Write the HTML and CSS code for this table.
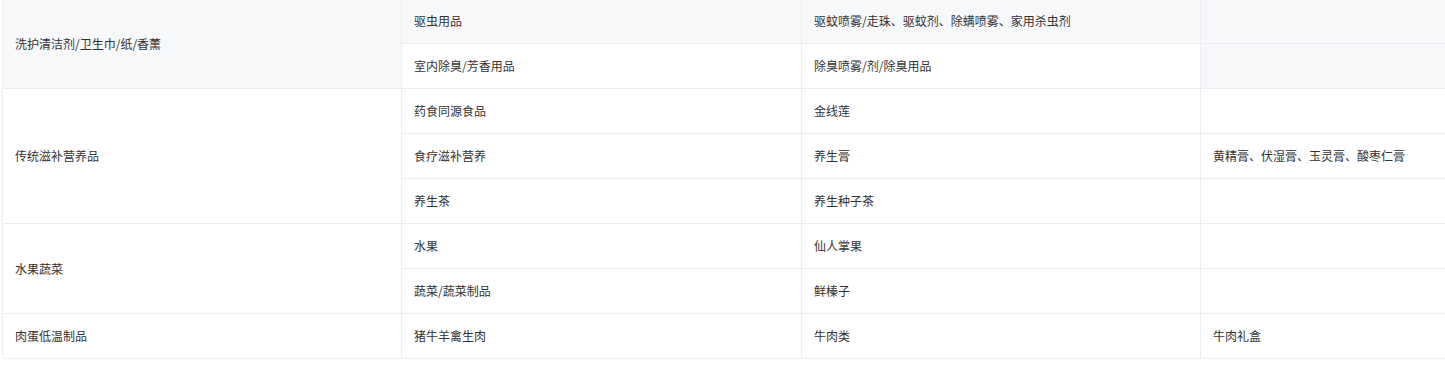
FILE: index.html
```html
<!DOCTYPE html>
<html lang="zh-CN">
<head>
<meta charset="utf-8">
<title>类目表</title>
<link rel="stylesheet" href="styles.css">
</head>
<body>
<div class="scroller">
<div class="table-wrap">
  <table class="cat-table">
    <colgroup>
      <col class="c1"><col class="c2"><col class="c3"><col class="c4">
    </colgroup>
    <tbody>
      <tr class="row-gray">
        <td rowspan="2" class="gray">洗护清洁剂/卫生巾/纸/香薰</td>
        <td>驱虫用品</td>
        <td>驱蚊喷雾/走珠、驱蚊剂、除螨喷雾、家用杀虫剂</td>
        <td></td>
      </tr>
      <tr>
        <td>室内除臭/芳香用品</td>
        <td>除臭喷雾/剂/除臭用品</td>
        <td class="gray"></td>
      </tr>
      <tr>
        <td rowspan="3">传统滋补营养品</td>
        <td>药食同源食品</td>
        <td>金线莲</td>
        <td></td>
      </tr>
      <tr>
        <td>食疗滋补营养</td>
        <td>养生膏</td>
        <td>黄精膏、伏湿膏、玉灵膏、酸枣仁膏</td>
      </tr>
      <tr>
        <td>养生茶</td>
        <td>养生种子茶</td>
        <td></td>
      </tr>
      <tr>
        <td rowspan="2">水果蔬菜</td>
        <td>水果</td>
        <td>仙人掌果</td>
        <td></td>
      </tr>
      <tr>
        <td>蔬菜/蔬菜制品</td>
        <td>鲜榛子</td>
        <td></td>
      </tr>
      <tr class="last">
        <td>肉蛋低温制品</td>
        <td>猪牛羊禽生肉</td>
        <td>牛肉类</td>
        <td>牛肉礼盒</td>
      </tr>
    </tbody>
  </table>
</div>
</div>
</body>
</html>
```
FILE: styles.css
```css
html, body {
  margin: 0;
  padding: 0;
  background: #ffffff;
}
body {
  font-family: "Noto Sans CJK SC", "Microsoft YaHei", sans-serif;
  font-size: 12px;
  color: #323233;
}
.scroller {
  width: 1445px;
  height: 368px;
  overflow: hidden;
}
.table-wrap {
  margin: -2px 0 0 2px;
  width: 1600px;
  border: 1px solid #ebedf0;
  border-radius: 4px;
  overflow: hidden;
}
.cat-table {
  border-collapse: separate;
  border-spacing: 0;
  table-layout: fixed;
  width: 1598px;
}
.c1 { width: 399px; }
.c2 { width: 400px; }
.c3 { width: 399px; }
.c4 { width: 400px; }
.cat-table td {
  box-sizing: border-box;
  height: 45px;
  padding: 0 12px;
  border-right: 1px solid #ebedf0;
  border-bottom: 1px solid #ebedf0;
  vertical-align: middle;
  line-height: 16px;
  white-space: nowrap;
}
.cat-table tr.last td {
  border-bottom: none;
  height: 44px;
}
.row-gray td,
.cat-table td.gray {
  background: #f7f8fa;
}
```
